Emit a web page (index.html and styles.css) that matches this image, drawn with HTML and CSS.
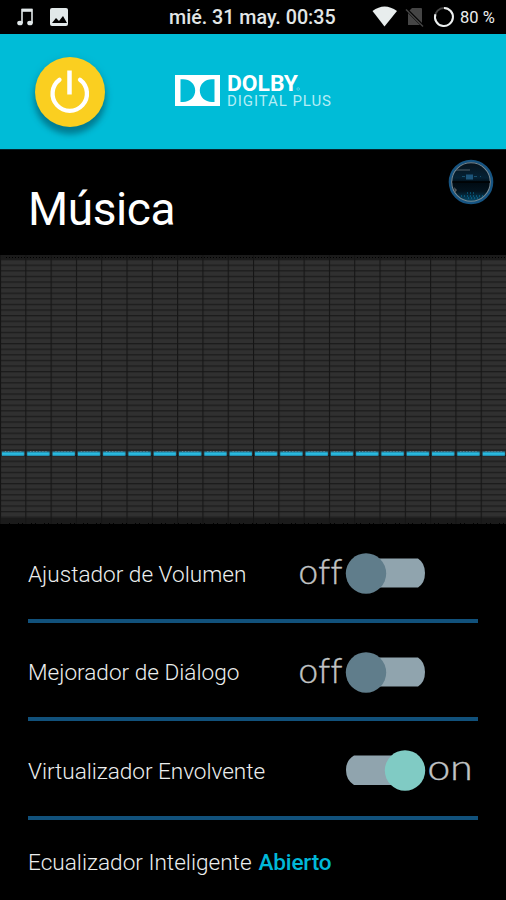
FILE: index.html
```html
<!DOCTYPE html>
<html lang="es">
<head>
<meta charset="utf-8">
<title>Dolby Digital Plus</title>
<link rel="stylesheet" href="styles.css">
</head>
<body>
<header class="status">
  <div class="notifications">
    <svg width="70" height="34" viewBox="0 0 70 34">
      <g fill="none" stroke="#e1e8e9" stroke-width="1.6"><path d="M22 23V9.5H32V23"/><path d="M22 10.3H32" stroke-width="3"/></g>
      <ellipse cx="20" cy="23" rx="2.8" ry="2.3" fill="#e1e8e9"/><ellipse cx="30" cy="23" rx="2.8" ry="2.3" fill="#e1e8e9"/>
      <rect x="50" y="8" width="18" height="18" rx="2" fill="#e1e8e9"/>
      <path d="M52 23l4-5 3 3 4-5 4 7z" fill="#000"/>
    </svg>
  </div>
  <div class="clock">mié. 31 may. 00:35</div>
  <div class="signals">
    <svg width="84" height="34" viewBox="0 0 84 34">
      <path d="M1.5 11Q13.5 2 26 11L13.5 26.5Z" fill="#e8eded"/>
      <path d="M41 8H50Q51 8 51 9V25H37Q37 25 37 24V12Z" fill="#454545"/>
      <path d="M34.5 8.5L52 26" stroke="#000" stroke-width="3"/><path d="M35 9.5L52 26.5" stroke="#454545" stroke-width="1.5"/>
      <circle cx="73" cy="17" r="9" fill="none" stroke="#444" stroke-width="2"/>
      <path d="M73 8A9 9 0 1 1 64.4 14.2" fill="none" stroke="#edf0f0" stroke-width="2"/>
    </svg>
    <span class="battery">80 %</span>
  </div>
</header>
<section class="brand">
  <button class="power" aria-label="Power">
    <svg width="70" height="70" viewBox="0 0 70 70"><g fill="none" stroke="#fff" stroke-linecap="round" stroke-width="4.3"><path d="M34.5 13.5V37.5" stroke-linecap="butt" stroke-width="4.5"/><path d="M24.5 22.8A17.2 17.2 0 1 0 45 22.8"/></g></svg>
  </button>
  <svg class="dolby" width="160" height="36" viewBox="0 0 160 36">
    <rect x="0" y="2" width="45" height="31" fill="#fff"/>
    <path d="M5.5 6.3H8C15 6.3 20.2 11 20.2 17.5S15 29 8 29H5.5ZM39.5 6.3H37C30 6.3 24.8 11 24.8 17.5S30 29 37 29H39.5Z" fill="#00bcd7"/>
    <text class="logo-main" x="52" y="18" textLength="71" lengthAdjust="spacingAndGlyphs">DOLBY</text>
    <text class="logo-sub" x="52" y="33.3" textLength="104">DIGITAL PLUS</text>
    <circle cx="123.2" cy="16" r="1.3" fill="none" stroke="#6bd9e8" stroke-width=".7"/>
  </svg>
</section>
<section class="heading">
  <h1>Música</h1>
  <svg class="preset" width="46" height="46" viewBox="0 0 46 46">
    <defs><linearGradient id="scene" x2="0" y2="1"><stop offset="0" stop-color="#071018"/><stop offset=".4" stop-color="#052235"/><stop offset=".52" stop-color="#000b13"/><stop offset=".72" stop-color="#03131e"/><stop offset="1" stop-color="#075478"/></linearGradient></defs>
    <circle cx="23" cy="23" r="21" fill="url(#scene)" stroke="#165482" stroke-width="2.6"/>
    <circle cx="23" cy="23" r="19.3" fill="none" stroke="#778a95" stroke-width="1.1"/>
    <path d="M8 11H22" stroke="#53616a"/><path d="M14 17.5H33" stroke="#174e6c" stroke-dasharray="3 3"/><rect x="18" y="15.5" width="7" height="5" fill="#1d557a"/>
    <path d="M4.5 23H42" stroke="#000" stroke-width="1.5"/><path d="M13 37H35M19 34H28M20 39H30" stroke="#087da9" stroke-dasharray="1 2"/><path d="M6 28l3 3-2 3" fill="#52575b"/>
  </svg>
</section>
<section class="equalizer">
  <svg width="506" height="269" viewBox="0 0 506 269">
    <defs>
      <pattern id="rows" y="4" width="506" height="5.6" patternUnits="userSpaceOnUse"><rect width="506" height="5.6" fill="#303030"/><rect width="506" height="1.3" fill="#1c1c1c"/></pattern>
      <pattern id="cols" width="25.3" height="269" patternUnits="userSpaceOnUse"><rect width="1.1" height="269" fill="#151515"/></pattern>
      <pattern id="bars" width="25.3" height="269" patternUnits="userSpaceOnUse"><rect x="1.8" y="196.5" width="22.4" height="4.5" fill="#238eae"/><rect x="2" y="197.8" width="22" height="2" fill="#29bce2"/><path d="M5 196.6H23" stroke="#7790a0" stroke-dasharray="1 2"/></pattern>
    </defs>
    <rect width="506" height="269" fill="#1b1b1b"/>
    <rect y="4" width="506" height="259" fill="url(#rows)"/>
    <path d="M6 2.5H506" stroke="#000" stroke-dasharray="1 2"/>
    <rect width="506" height="269" fill="url(#cols)"/>
    <rect y="196" width="506" height="6" fill="url(#bars)"/>
    <path d="M9 268.5H506" stroke="#000" stroke-dasharray="1 8 1 3"/>
  </svg>
</section>
<main class="settings">
  <div class="setting">
    <span class="label">Ajustador de Volumen</span>
    <svg class="switch" width="180" height="50" viewBox="0 0 180 50"><text class="state" x="-.5" y="35" textLength="44">off</text><path d="M68 9.5H119Q126 14 126 24T119 38.5H68Z" fill="#90a4ae"/><circle cx="67" cy="24.5" r="20.2" fill="#607d8b"/></svg>
  </div>
  <div class="setting">
    <span class="label">Mejorador de Diálogo</span>
    <svg class="switch" width="180" height="50" viewBox="0 0 180 50"><text class="state" x="-.5" y="35" textLength="44">off</text><path d="M68 9.5H119Q126 14 126 24T119 38.5H68Z" fill="#90a4ae"/><circle cx="67" cy="24.5" r="20.2" fill="#607d8b"/></svg>
  </div>
  <div class="setting">
    <span class="label">Virtualizador Envolvente</span>
    <svg class="switch" width="180" height="50" viewBox="0 0 180 50"><path d="M55 9.5H105V39H55Q47 34 47 24T55 9.5Z" fill="#90a4ae"/><circle cx="106" cy="24.5" r="20.2" fill="#80cbc4"/><text class="state" x="128.5" y="33.5" textLength="45" lengthAdjust="spacingAndGlyphs">on</text></svg>
  </div>
  <div class="smart"><span class="label">Ecualizador Inteligente</span><b>Abierto</b></div>
</main>
</body>
</html>
```
FILE: styles.css
```css
* { box-sizing: border-box; }
body { margin: 0; width: 506px; height: 900px; overflow: hidden; background: #000; color: #eceeee; font-family: Roboto, sans-serif; }
svg { display: block; flex: none; }
.status { display: flex; height: 34px; align-items: center; }
.notifications { width: 169px; }
.clock { width: 202px; padding-top: 2px; font-size: 19.7px; font-weight: 500; line-height: 32px; white-space: nowrap; color: #e2e6e6; }
.signals { display: flex; align-items: center; }
.battery { margin-left: 5px; padding-top: 2px; font-size: 16.5px; line-height: 32px; white-space: nowrap; }
.brand { display: flex; height: 116px; padding: 23px 0 0 35px; background: #00bcd7; border-bottom: 1px solid #05232b; }
.power { width: 70px; height: 70px; padding: 0; border: 0; border-radius: 50%; background: #facf20; box-shadow: 0 7px 6px #007c92, 0 3px 8px #079bb2; }
.dolby { margin: 16px 0 0 70px; overflow: visible; }
.logo-main { fill: #fff; font: 700 21.5px Roboto, sans-serif; }
.logo-sub { fill: #b4edf5; font: 400 15px Roboto, sans-serif; }
.heading { display: flex; height: 105px; justify-content: space-between; padding: 9px 12px 0 28px; }
h1 { margin: 22px 0 0; font-size: 46px; line-height: 56px; font-weight: 400; letter-spacing: -.4px; color: #fff; }
.equalizer { height: 269px; }
.settings { padding: 0 28px; }
.setting { display: flex; justify-content: space-between; align-items: center; height: 98.5px; padding-top: 5px; border-bottom: 4px solid #11517b; }
.setting:first-child { height: 99px; }
.setting:nth-child(2) { height: 98px; }
.label { padding-top: 1px; font-size: 22.6px; font-weight: 300; line-height: 32px; white-space: nowrap; }
.setting:nth-child(3) .label { padding-top: 3px; letter-spacing: -.04px; }
.switch { margin-right: -1px; overflow: visible; }
.state { font: 300 35px Lato, sans-serif; fill: #c1c4c5; stroke: #c1c4c5; stroke-width: .4px; font-variant-ligatures: none; }
.smart { display: flex; gap: 7px; padding-top: 26px; }
.smart b { padding-top: 1px; color: #00b8d8; font-size: 22.6px; line-height: 32px; font-weight: 500; letter-spacing: -.2px; }
```
